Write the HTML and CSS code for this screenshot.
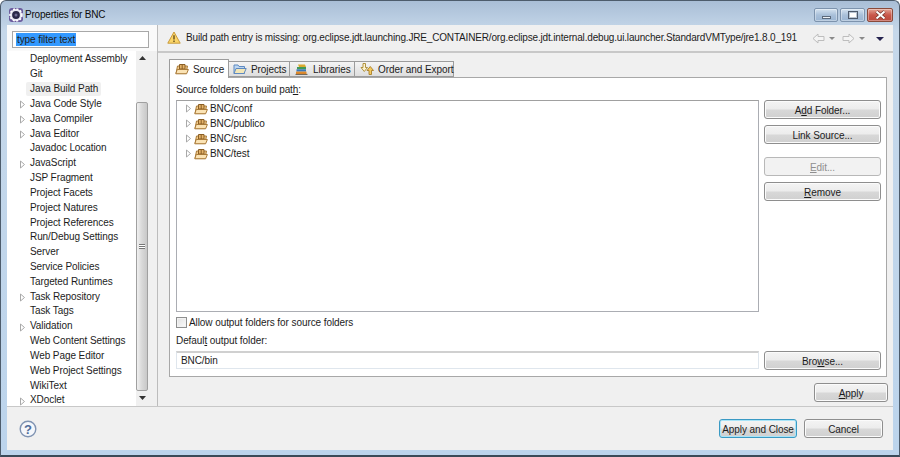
FILE: index.html
```html
<!DOCTYPE html>
<html lang="en">
<head>
<meta charset="utf-8">
<title>Properties for BNC</title>
<link rel="stylesheet" href="styles.css">
</head>
<body>
<svg class="defs" width="0" height="0">
  <defs>
    <symbol id="pkgfolder" viewBox="0 0 14 12">
      <path d="M1 10.500 2.500 3h10L11 10.500z" fill="#f3cb88" stroke="#a97a38"/>
      <path d="M4.500 1.500h5.500v4.500H4.500z" fill="#e5b46a" stroke="#8a5f26"/>
      <path d="M7.200 1.500v4.500" stroke="#8a5f26"/>
      <path d="M.8 10.800 2.200 6.500h11.200l-1.800 4.300z" fill="#fbe3b4" stroke="#a97a38"/>
    </symbol>
    <symbol id="arrow" viewBox="0 0 7 9">
      <path d="M1.500 1 5.500 4.500 1.500 8z" fill="#fff" stroke="#a9a9a9"/>
    </symbol>
  </defs>
</svg>
<div class="window">
  <header class="titlebar">
    <svg class="appicon" viewBox="0 0 16 16" width="16" height="16">
      <rect x="1" y="1" width="14" height="14" rx="3" fill="#6a5a9c"/>
      <circle cx="8" cy="8" r="6" fill="#e9e7f2"/>
      <circle cx="8" cy="8" r="6" fill="none" stroke="#fff" stroke-width="1.600" stroke-dasharray="2 1.500"/>
      <circle cx="8" cy="8" r="3.900" fill="#2a2748"/>
      <circle cx="8" cy="8" r="1.500" fill="#6f6a92"/>
    </svg>
    <span class="title">Properties for BNC</span>
    <div class="winbtns">
      <span class="winbtn"><i class="glyph-min"></i></span>
      <span class="winbtn wide"><i class="glyph-max"></i></span>
      <span class="winbtn close"><svg viewBox="0 0 13 10" width="13" height="10"><path d="M2.500 1.500l8 7M10.500 1.500l-8 7" stroke="#70332a" stroke-width="3.400"/><path d="M2.500 1.500l8 7M10.500 1.500l-8 7" stroke="#fff" stroke-width="2"/></svg></span>
    </div>
  </header>
  <div class="client">
    <div class="main">
      <aside class="sidebar">
        <div class="filter"><span class="selected">type filter text</span></div>
        <div class="treewrap">
          <ul class="tree">
            <li class="row"><span class="label">Deployment Assembly</span></li>
            <li class="row"><span class="label">Git</span></li>
            <li class="row"><span class="label current">Java Build Path</span></li>
            <li class="row"><svg class="exp"><use href="#arrow"/></svg><span class="label">Java Code Style</span></li>
            <li class="row"><svg class="exp"><use href="#arrow"/></svg><span class="label">Java Compiler</span></li>
            <li class="row"><svg class="exp"><use href="#arrow"/></svg><span class="label">Java Editor</span></li>
            <li class="row"><span class="label">Javadoc Location</span></li>
            <li class="row"><svg class="exp"><use href="#arrow"/></svg><span class="label">JavaScript</span></li>
            <li class="row"><span class="label">JSP Fragment</span></li>
            <li class="row"><span class="label">Project Facets</span></li>
            <li class="row"><span class="label">Project Natures</span></li>
            <li class="row"><span class="label">Project References</span></li>
            <li class="row"><span class="label">Run/Debug Settings</span></li>
            <li class="row"><span class="label">Server</span></li>
            <li class="row"><span class="label">Service Policies</span></li>
            <li class="row"><span class="label">Targeted Runtimes</span></li>
            <li class="row"><svg class="exp"><use href="#arrow"/></svg><span class="label">Task Repository</span></li>
            <li class="row"><span class="label">Task Tags</span></li>
            <li class="row"><svg class="exp"><use href="#arrow"/></svg><span class="label">Validation</span></li>
            <li class="row"><span class="label">Web Content Settings</span></li>
            <li class="row"><span class="label">Web Page Editor</span></li>
            <li class="row"><span class="label">Web Project Settings</span></li>
            <li class="row"><span class="label">WikiText</span></li>
            <li class="row"><svg class="exp"><use href="#arrow"/></svg><span class="label">XDoclet</span></li>
          </ul>
          <div class="scrollbar">
            <svg class="sbarrow" viewBox="0 0 7 4" width="7" height="4"><path d="M0 4 3.500 0 7 4z" fill="#333"/></svg>
            <div class="thumb"><i class="grip"></i></div>
            <svg class="sbarrow" viewBox="0 0 7 4" width="7" height="4"><path d="M0 0 3.500 4 7 0z" fill="#333"/></svg>
          </div>
          <div class="gutter"></div>
        </div>
      </aside>
      <section class="content">
        <div class="message">
          <svg class="warn" viewBox="0 0 14 13" width="14" height="13"><path d="M7 1 13.200 12.200H.8z" fill="#fbd568" stroke="#c99a3a" stroke-linejoin="round"/><path d="M7 4.200v4.400" stroke="#6b5520" stroke-width="1.500"/><path d="M7 9.600v1.500" stroke="#6b5520" stroke-width="1.500"/></svg>
          <span class="msgtext">Build path entry is missing: org.eclipse.jdt.launching.JRE_CONTAINER/org.eclipse.jdt.internal.debug.ui.launcher.StandardVMType/jre1.8.0_191</span>
          <div class="nav">
            <svg viewBox="0 0 13 11" width="13" height="11"><path d="M1 5.500 6 1v2.500h6v4H6V10z" fill="#f4f4f4" stroke="#bdbdbd"/></svg>
            <svg viewBox="0 0 6 3" width="6" height="3"><path d="M0 0h6L3 3z" fill="#8a8a8a"/></svg>
            <svg class="navfwd" viewBox="0 0 13 11" width="13" height="11"><path d="M12 5.500 7 1v2.500H1v4h6V10z" fill="#f4f4f4" stroke="#bdbdbd"/></svg>
            <svg viewBox="0 0 6 3" width="6" height="3"><path d="M0 0h6L3 3z" fill="#8a8a8a"/></svg>
            <svg class="navmenu" viewBox="0 0 8 4" width="8" height="4"><path d="M0 0h8L4 4z" fill="#26234f"/></svg>
          </div>
        </div>
        <div class="body">
          <div class="tabs">
            <div class="tab active tab-source"><svg class="tabicon"><use href="#pkgfolder"/></svg><span>Source</span></div>
            <div class="tab tab-projects">
              <svg class="tabicon" viewBox="0 0 14 12"><path d="M1 10.500V2h4l1 1.500h5.500v7z" fill="#bcd6f2" stroke="#5f8ac0"/><path d="M1 10.500 3 5.500h10.200L11 10.500z" fill="#f3e7b8" stroke="#5f8ac0"/></svg>
              <span>Projects</span>
            </div>
            <div class="tab tab-libraries">
              <svg class="tabicon" viewBox="0 0 14 12"><path d="M3 1.500h7l1 2.500H4z" fill="#d9a92e"/><path d="M2 4h9v2.300H2z" fill="#3f9a58"/><path d="M1.500 6.300h9.500v2.300H1.500z" fill="#3b78b8"/><path d="M1 8.600h10.500v2.400H1z" fill="#e08a2a"/><path d="M.5 11.400h12" stroke="#6a5a48"/></svg>
              <span>Libraries</span>
            </div>
            <div class="tab tab-order">
              <svg class="tabicon" viewBox="0 0 14 12"><path d="M3 .5h2.500v4H7.500L4.250 8.500 1 4.500h2z" fill="#fdf3cf" stroke="#a8882e" stroke-width=".9"/><path d="M9 11.500h2.500v-4h2L10.250 3.500 7 7.500h2z" fill="#f5c95c" stroke="#a8802a" stroke-width=".9"/></svg>
              <span>Order and Export</span>
            </div>
          </div>
          <div class="panel">
            <div class="srcgrid">
              <div class="srcleft">
                <div class="caption">Source folders on build pat<u>h</u>:</div>
                <ul class="srctree">
                  <li class="srcrow"><svg class="exp"><use href="#arrow"/></svg><svg class="pkg"><use href="#pkgfolder"/></svg><span>BNC/conf</span></li>
                  <li class="srcrow"><svg class="exp"><use href="#arrow"/></svg><svg class="pkg"><use href="#pkgfolder"/></svg><span>BNC/publico</span></li>
                  <li class="srcrow"><svg class="exp"><use href="#arrow"/></svg><svg class="pkg"><use href="#pkgfolder"/></svg><span>BNC/src</span></li>
                  <li class="srcrow"><svg class="exp"><use href="#arrow"/></svg><svg class="pkg"><use href="#pkgfolder"/></svg><span>BNC/test</span></li>
                </ul>
                <label class="check"><span class="box"></span>Allow output folders for source folders</label>
                <div class="caption second">Defaul<u>t</u> output folder:</div>
                <div class="output">BNC/bin</div>
              </div>
              <div class="srcbtns">
                <div class="btn">A<u>d</u>d Folder...</div>
                <div class="btn">Link Source...</div>
                <div class="btn disabled spaced"><u>E</u>dit...</div>
                <div class="btn"><u>R</u>emove</div>
                <div class="btn browse">Bro<u>w</u>se...</div>
              </div>
            </div>
          </div>
          <div class="applyrow"><div class="btn apply"><u>A</u>pply</div></div>
        </div>
      </section>
    </div>
    <footer class="footer">
      <svg class="help" viewBox="0 0 18 18" width="18" height="18"><circle cx="9" cy="9" r="7.800" fill="#f5f7fb" stroke="#7f93b2" stroke-width="1.400"/><text x="9" y="13.500" text-anchor="middle" class="helpq">?</text></svg>
      <div class="footbtns">
        <div class="btn default">Apply and Close</div>
        <div class="btn cancel">Cancel</div>
      </div>
    </footer>
  </div>
</div>
</body>
</html>
```
FILE: styles.css
```css
* { box-sizing: border-box; }
html, body { margin: 0; padding: 0; width: 900px; height: 457px; overflow: hidden; }
body { font: 10px/13px "Liberation Sans", sans-serif; letter-spacing: -.08px; color: #1c1c1c; }
u { text-decoration: underline; }
ul { list-style: none; margin: 0; padding: 0; }
.defs { position: absolute; }

.window { width: 900px; height: 457px; display: flex; flex-direction: column; padding: 0 6px 5px 6px;
  background: linear-gradient(#a9bed6 0, #c6d8ea 30px, #bcd4ec 100%); border: 1px solid #4d5c6c; border-radius: 6px 6px 0 0; border-bottom: 2px solid #3a4a58; }
.titlebar { height: 24px; flex: none; display: flex; align-items: center; padding-top: 3px; }
.appicon { margin: 0 1px 0 1px; }
.title { font-size: 10px; letter-spacing: -.2px; color: #0c0c0c; }
.winbtns { margin-left: auto; align-self: flex-start; display: flex; gap: 2px; margin-top: 4px; }
.winbtn { width: 24px; height: 14px; border: 1px solid #7d93ad; border-radius: 2px; background: linear-gradient(#d6e3f0, #a9c0da 50%, #9bb5d2); box-shadow: inset 0 0 0 1px rgba(255,255,255,.35); display: flex; align-items: center; justify-content: center; }
.winbtn.wide { width: 25px; }
.winbtn.close { width: 26px; background: linear-gradient(#e3a595, #c9574a 50%, #bb4a3c); border-color: #8a4a3a; }
.glyph-min { width: 9px; height: 3px; background: #eef2f7; border: 1px solid #5c6a7c; margin-top: 4px; }
.glyph-max { width: 10px; height: 8px; border: 1px solid #4d5a6c; background: #fff; box-shadow: inset 0 0 0 1px #b9c6d4; }

.client { flex: 1; background: #f0f0f0; display: flex; flex-direction: column; min-height: 0; }
.main { flex: 1; display: flex; min-height: 0; border-bottom: 1px solid #c8c8c8; }

.sidebar { width: 151px; flex: none; background: #fafafa; border-right: 1px solid #bcbcbc; display: flex; flex-direction: column; }
.filter { margin: 6px 0 3px 5px; width: 137px; height: 17px; border: 1px solid #a8a8a8; background: #fff; padding: 1px 0 0 3px; flex: none; }
.selected { background: #3399ff; color: #222; display: inline-block; height: 13px; line-height: 13px; padding: 0 1px; }
.treewrap { flex: 1; display: flex; min-height: 0; }
.tree { flex: 1; min-width: 0; background: #fff; padding-top: 1px; }
.row { height: 14.83px; display: flex; align-items: center; padding-left: 13px; position: relative; white-space: nowrap; }
.row .exp { position: absolute; left: 12px; top: 4px; }
.label { margin-left: 9px; padding: 0 1px; height: 14px; line-height: 14px; }
.label.current { background: #f0f0f0; border-radius: 2px; padding: 0 3px 0 4px; margin-left: 6px; }
.exp { width: 7px; height: 9px; flex: none; }

.scrollbar { width: 12px; flex: none; display: flex; flex-direction: column; align-items: center; background: #f0f0f0; padding: 5px 0 6px; }
.sbarrow { flex: none; }
.thumb { width: 12px; flex: 1; margin: 42px 0 5px; border: 1px solid #a0a0a0; border-radius: 2px; background: linear-gradient(90deg, #f0f0f0, #d8d8d8 50%, #c8c8c8); display: flex; align-items: center; justify-content: center; }
.grip { width: 6px; height: 5px; border-top: 1px solid #777; border-bottom: 1px solid #777; background: linear-gradient(#fff 0, #fff 1px, #777 1px, #777 2px, #fff 2px); }
.gutter { width: 9px; flex: none; background: #f0f0f0; }

.content { flex: 1; min-width: 0; display: flex; flex-direction: column; }
.message { height: 28px; flex: none; display: flex; align-items: center; padding: 0 9px 2px 9px; border-bottom: 2px solid #c8c8c8; white-space: nowrap; }
.warn { flex: none; margin-right: 5px; }
.msgtext { flex: 1; min-width: 0; letter-spacing: -.17px; }
.nav { display: flex; align-items: center; gap: 4px; flex: none; margin-top: 3px; }
.navfwd { margin-left: 3px; }
.navmenu { margin-left: 7px; }

.body { flex: 1; display: flex; flex-direction: column; padding: 6px 6px 0 11px; min-height: 0; }
.tabs { height: 18px; flex: none; display: flex; align-items: flex-end; position: relative; z-index: 1; }
.tab { height: 16px; display: flex; align-items: center; gap: 4px; padding-left: 5px; border: 1px solid #9c9c9c; border-left-width: 0; background: linear-gradient(#f4f4f4, #dedede); white-space: nowrap; }
.tab.active { height: 19px; margin-bottom: -1px; background: #fff; border: 1px solid #9c9c9c; border-bottom: 0; border-radius: 1px 1px 0 0; }
.tab-source { width: 60px; }
.tab-projects { width: 61px; padding-left: 4px; }
.tab-libraries { width: 65px; }
.tab-order { width: 99px; }
.tabicon { width: 14px; height: 12px; flex: none; }
.panel { height: 300px; flex: none; background: #fff; border: 1px solid #a8a8a8; padding: 4px 5px 0 6px; }
.srcgrid { display: flex; height: 100%; gap: 5px; }
.srcleft { width: 583px; flex: none; display: flex; flex-direction: column; }
.caption { height: 14px; line-height: 16px; white-space: nowrap; }
.caption.second { margin-top: 3px; }
.srctree { height: 212px; margin-top: 4px; border: 1px solid #abadb3; border-top-color: #a0a0a0; padding: 0 0 0 8px; flex: none; }
.srcrow { display: flex; align-items: center; height: 15px; }
.pkg { width: 14px; height: 12px; margin: 0 2px; flex: none; }
.check { display: flex; align-items: center; height: 15px; gap: 2px; margin-top: 3px; }
.box { width: 11px; height: 11px; border: 1px solid #8e8f8f; background: linear-gradient(135deg, #e0e0e0, #fbfbfb); box-shadow: inset 0 0 0 1px #f2f2f2; flex: none; }
.output { height: 18px; margin-top: 4px; border: 1px solid #dfe6ed; border-top: 2px solid #d0d0d0; line-height: 15px; padding-left: 4px; }

.srcbtns { flex: 1; display: flex; flex-direction: column; gap: 6px; padding-top: 18px; }
.btn { height: 19px; border: 1px solid #8e8e8e; border-radius: 3px; background: linear-gradient(#f4f4f4 0, #ececec 48%, #d8d8d8 52%, #d0d0d0 100%); text-align: center; line-height: 19px; box-shadow: inset 0 0 0 1px #fbfbfb; flex: none; white-space: nowrap; }
.btn.disabled { color: #8f8f8f; background: #f2f2f2; border-color: #b8b8b8; box-shadow: none; }
.btn.spaced { margin-top: 7px; }
.btn.browse { margin-top: auto; margin-bottom: 6px; }
.applyrow { display: flex; justify-content: flex-end; margin: 6px -1px 0 0; }
.btn.apply { width: 74px; }

.footer { height: 43px; flex: none; display: flex; align-items: center; padding: 0 10px 0 12px; }
.help { flex: none; }
.helpq { font: bold 13px "Liberation Sans", sans-serif; fill: #4f6c9a; }
.footbtns { margin-left: auto; display: flex; gap: 7px; }
.btn.default { width: 78px; border-color: #3a9ac4; box-shadow: inset 0 0 0 1px #a8e4f8; }
.btn.cancel { width: 79px; }
```
